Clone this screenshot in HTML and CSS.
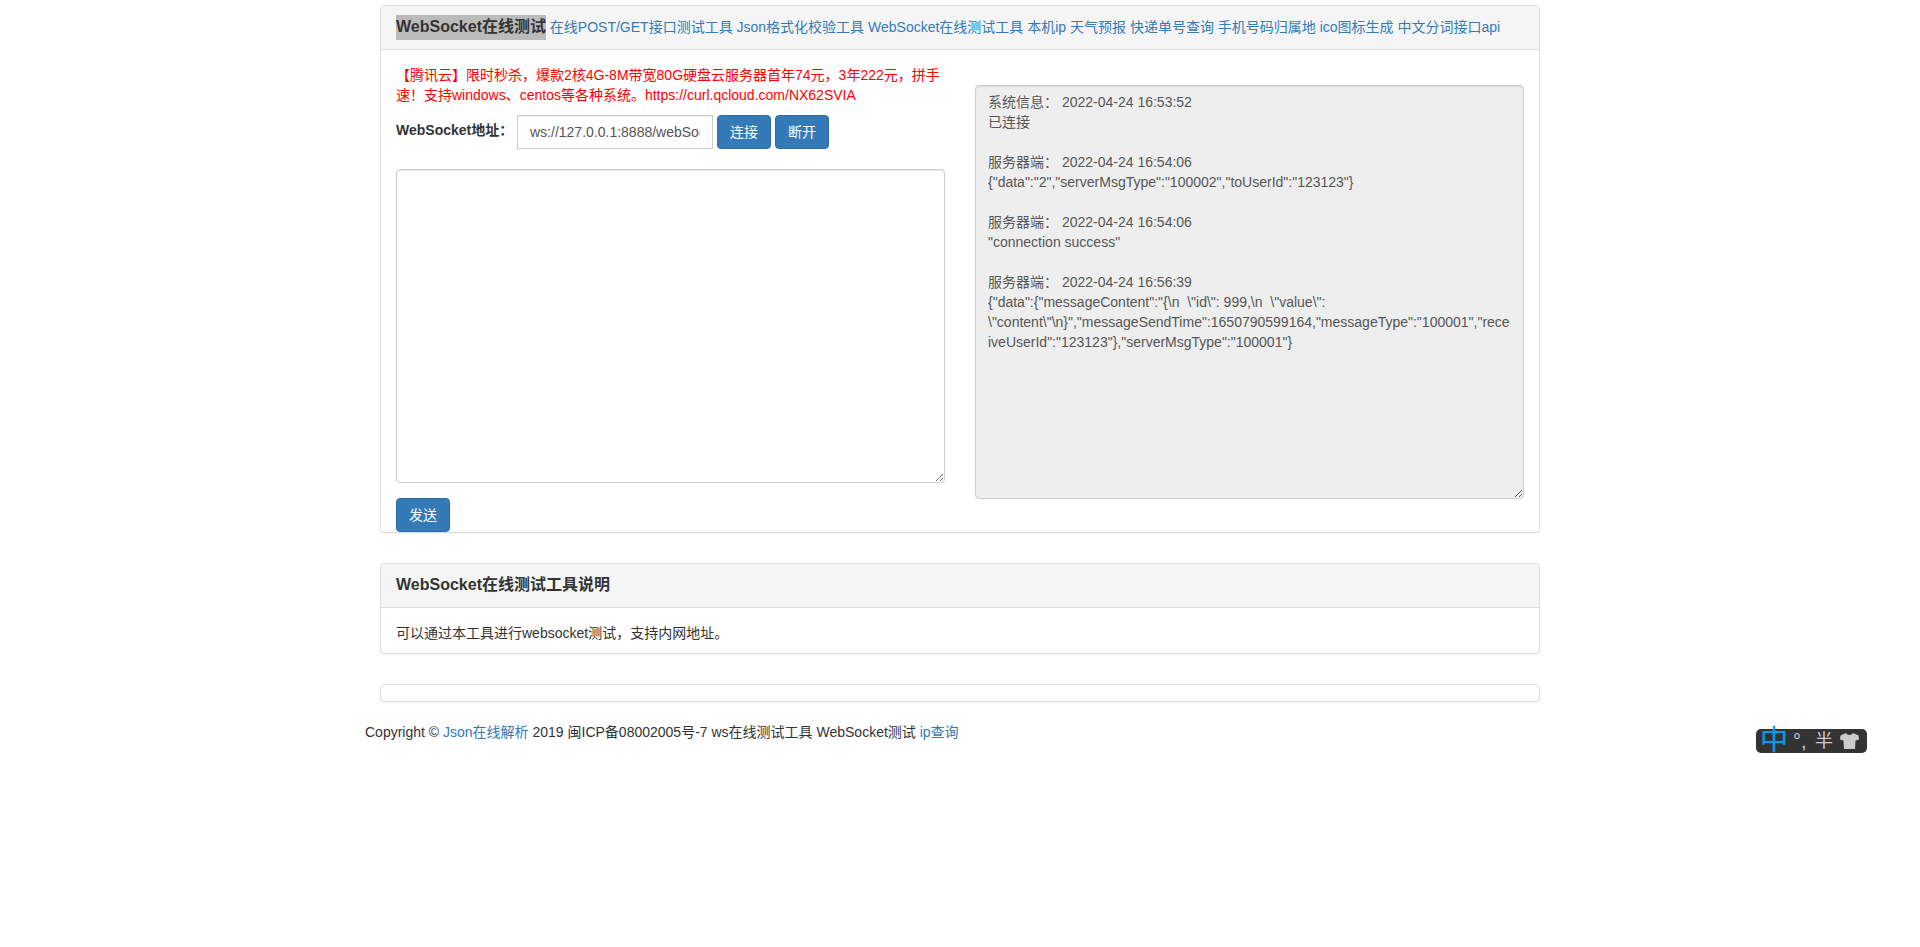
FILE: index.html
```html
<!DOCTYPE html>
<html lang="en">
<head>
    <meta charset="UTF-8">
    <meta name="viewport" content="width=device-width, initial-scale=1.0">
    <title>WebSocket在线测试</title>
    <link rel="stylesheet" href="styles.css">
</head>
<body>
<div class="container">
    <!-- Tool panel -->
    <div class="panel">
        <div class="panel-heading">
            <h3 class="panel-title panel-title-inline"><mark class="selected">WebSocket在线测试</mark></h3>
            <a href="#">在线POST/GET接口测试工具</a>
            <a href="#">Json格式化校验工具</a>
            <a href="#">WebSocket在线测试工具</a>
            <a href="#">本机ip</a>
            <a href="#">天气预报</a>
            <a href="#">快递单号查询</a>
            <a href="#">手机号码归属地</a>
            <a href="#">ico图标生成</a>
            <a href="#">中文分词接口api</a>
        </div>
        <div class="panel-body tool-body">
            <div class="tool-left">
                <p class="promo">【腾讯云】限时秒杀，爆款2核4G-8M带宽80G硬盘云服务器首年74元，3年222元，拼手速！支持windows、centos等各种系统。https://curl.qcloud.com/NX62SVIA</p>
                <div class="address-row">
                    <label for="address">WebSocket地址：</label>
                    <input type="text" id="address" class="form-control address-input" value="ws://127.0.0.1:8888/webSocket">
                    <button type="button" class="btn">连接</button>
                    <button type="button" class="btn">断开</button>
                </div>
                <textarea class="form-control send-box"></textarea>
                <button type="button" class="btn">发送</button>
            </div>
            <div class="tool-right">
                <textarea class="form-control log-box" readonly>系统信息： 2022-04-24 16:53:52
已连接

服务器端： 2022-04-24 16:54:06
{"data":"2","serverMsgType":"100002","toUserId":"123123"}

服务器端： 2022-04-24 16:54:06
"connection success"

服务器端： 2022-04-24 16:56:39
{"data":{"messageContent":"{\n  \"id\": 999,\n  \"value\": \"content\"\n}","messageSendTime":1650790599164,"messageType":"100001","receiveUserId":"123123"},"serverMsgType":"100001"}</textarea>
            </div>
        </div>
    </div>

    <!-- Description panel -->
    <div class="panel">
        <div class="panel-heading">
            <h3 class="panel-title">WebSocket在线测试工具说明</h3>
        </div>
        <div class="panel-body desc-body">可以通过本工具进行websocket测试，支持内网地址。</div>
    </div>

    <div class="panel">
        <div class="panel-body empty-body"></div>
    </div>

    <div class="footer">
        Copyright © <a href="#">Json在线解析</a> 2019 闽ICP备08002005号-7 ws在线测试工具 WebSocket测试 <a href="#">ip查询</a>
    </div>
</div>

<!-- Input method toolbar -->
<div class="ime-bar">
    <span class="ime-lang">中</span>
    <span class="ime-mark">°,</span>
    <span class="ime-half">半</span>
    <svg class="ime-skin" width="21" height="18" viewBox="0 0 20 18">
        <path d="M6.5 1 L1 3.5 L0.5 7.5 L4 8.5 L4.5 17 L15.5 17 L16 8.5 L19.5 7.5 L19 3.5 L13.5 1 C12.5 3.5 7.5 3.5 6.5 1 Z" fill="#ccc"/>
    </svg>
</div>
</body>
</html>
```

FILE: styles.css
```css
* {
    box-sizing: border-box;
}

body {
    margin: 0;
    background-color: #fff;
    color: #333;
    font-family: "Liberation Sans", Arial, "Noto Sans CJK SC", sans-serif;
    font-size: 14px;
    line-height: 20px;
}

a {
    color: #337ab7;
    text-decoration: none;
}

.container {
    width: 1160px;
    margin-left: 380px;
    padding-top: 5px;
}

.panel {
    margin-bottom: 30px;
    background-color: #fff;
    border: 1px solid #ddd;
    border-radius: 4px;
    box-shadow: 0 1px 1px rgba(0, 0, 0, .05);
}

.panel-heading {
    height: 44px;
    padding: 10px 15px;
    background-color: #f5f5f5;
    border-bottom: 1px solid #ddd;
    border-radius: 3px 3px 0 0;
    white-space: nowrap;
}

.panel-title {
    margin: 0;
    font-size: 16px;
    font-weight: bold;
    line-height: 22px;
}

.panel-title-inline {
    display: inline;
}

.selected {
    padding: 3px 0 5px;
    background-color: #bbb;
    color: #333;
}

.panel-body {
    padding: 15px;
}

.tool-body {
    display: grid;
    grid-template-columns: 549px 549px;
    column-gap: 30px;
    padding-bottom: 0;
}

.promo {
    margin: 0 0 10px;
    color: red;
}

.address-row {
    display: flex;
    align-items: center;
    gap: 4px;
    margin-bottom: 20px;
}

.address-row label {
    width: 117px;
    margin-top: -4px;
    font-weight: bold;
    white-space: nowrap;
}

.form-control {
    display: block;
    padding: 6px 12px;
    color: #555;
    font-family: inherit;
    font-size: 14px;
    line-height: 20px;
    background-color: #fff;
    border: 1px solid #ccc;
    border-radius: 4px;
    box-shadow: inset 0 1px 1px rgba(0, 0, 0, .075);
}

.address-input {
    width: 196px;
    height: 34px;
    border-radius: 0;
}

.send-box {
    width: 100%;
    height: 314px;
    margin-bottom: 15px;
}

.log-box {
    width: 100%;
    height: 414px;
    margin-top: 20px;
    background-color: #eee;
}

.btn {
    display: block;
    height: 34px;
    padding: 6px 12px;
    color: #fff;
    font-family: inherit;
    font-size: 14px;
    line-height: 20px;
    background-color: #337ab7;
    border: 1px solid #2e6da4;
    border-radius: 4px;
}

.desc-body {
    padding-bottom: 10px;
}

.empty-body {
    padding: 16px 15px 0;
}

.footer {
    margin: -10px 0 0 -15px;
}

.ime-bar {
    position: absolute;
    left: 1756px;
    top: 729px;
    display: flex;
    align-items: center;
    width: 111px;
    height: 24px;
    padding-left: 4px;
    color: #ccc;
    background-color: #333;
    border-radius: 5px;
}

.ime-lang {
    width: 28px;
    color: #00a0e9;
    font-size: 28px;
    line-height: 24px;
}

.ime-mark {
    width: 27px;
    padding-left: 5px;
    font-size: 20px;
    line-height: 24px;
}

.ime-half {
    width: 24px;
    font-size: 18px;
    line-height: 24px;
}

.ime-skin {
    flex-shrink: 0;
}
```
